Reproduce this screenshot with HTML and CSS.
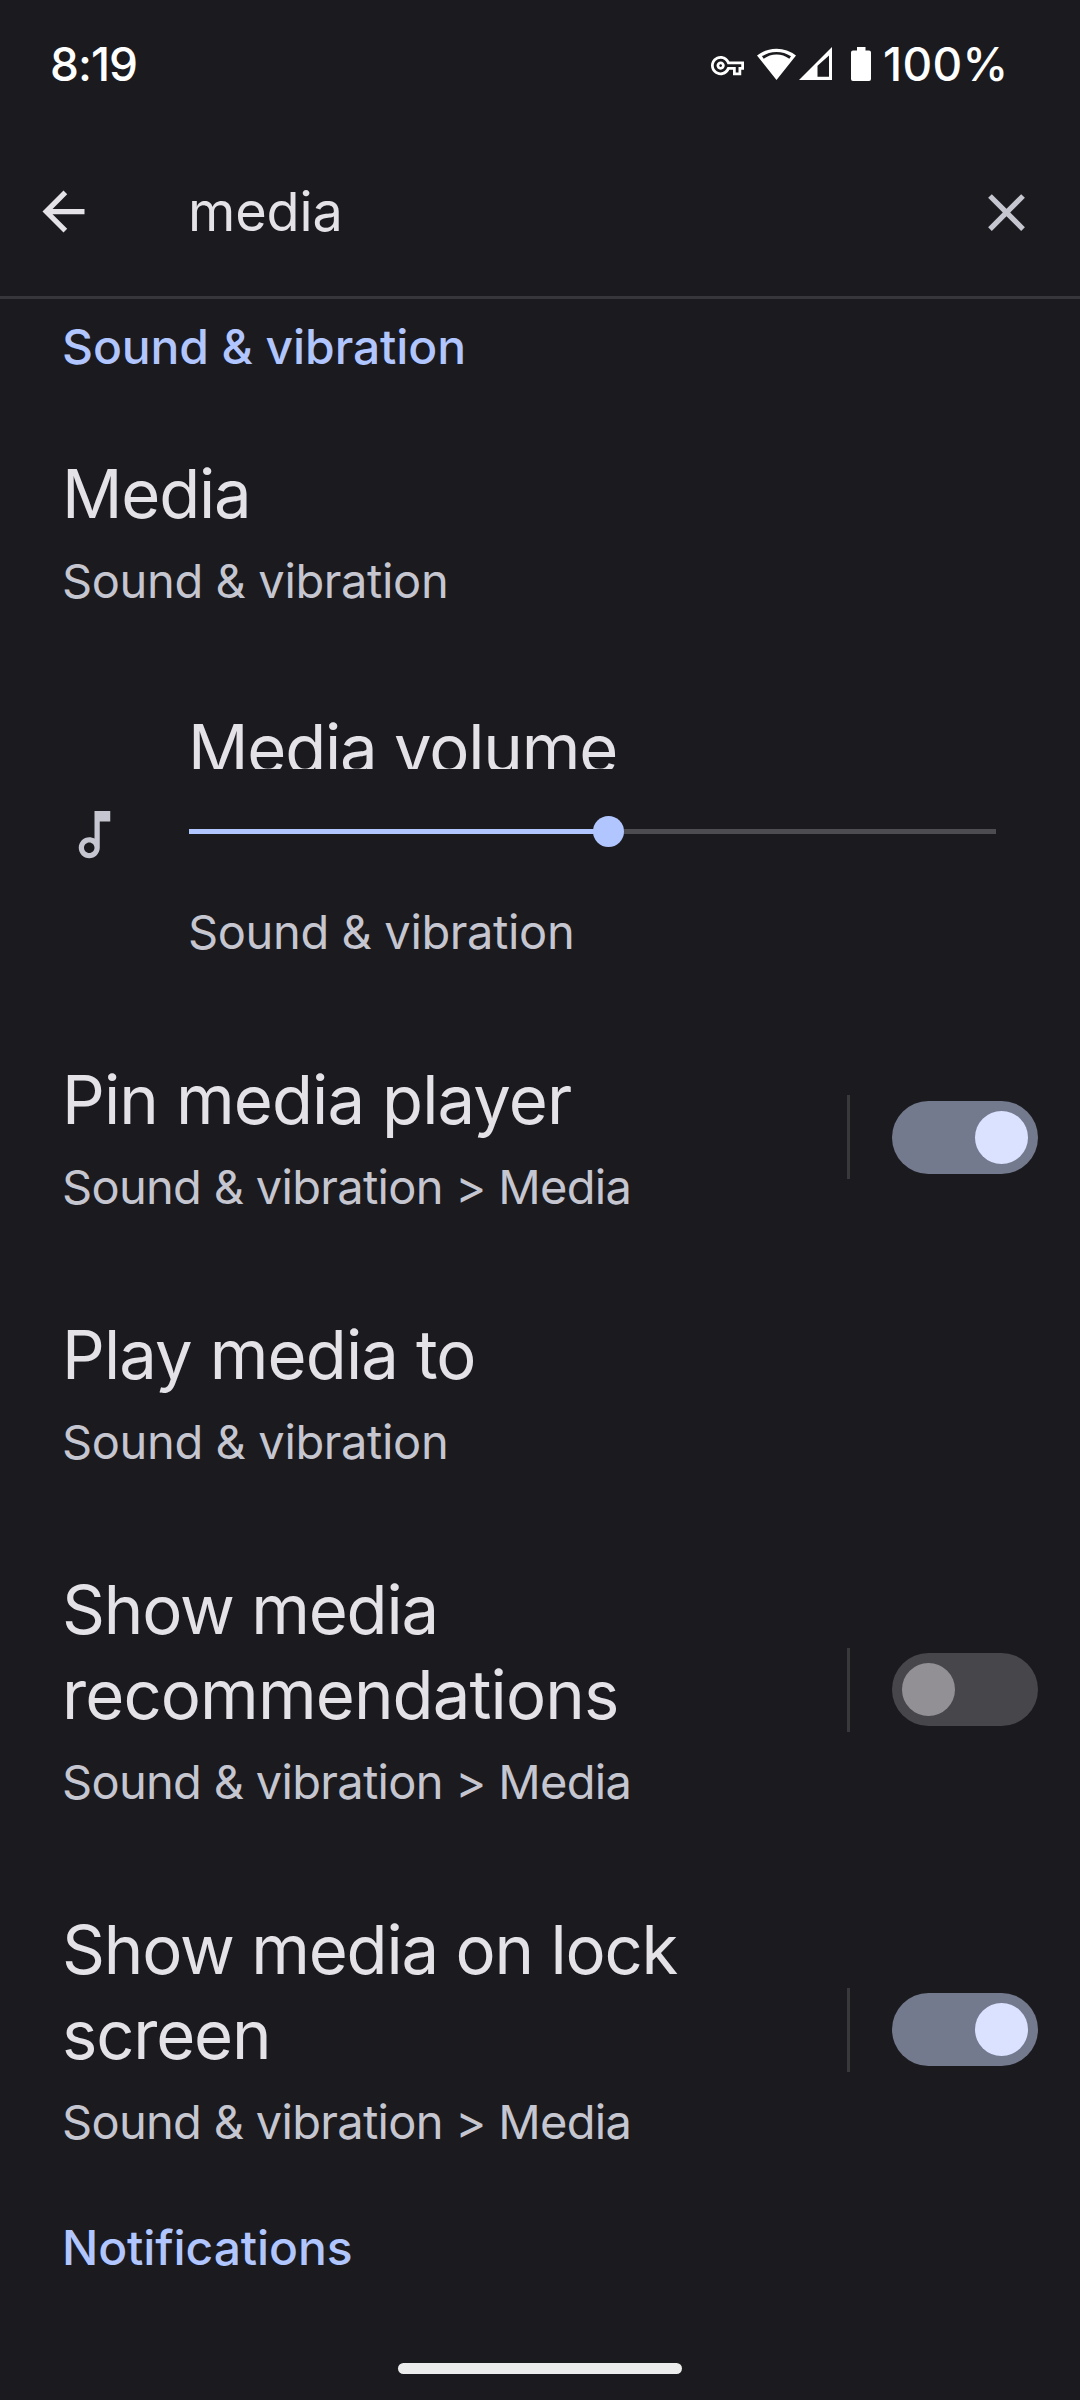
FILE: index.html
```
<!DOCTYPE html>
<html lang="en">
<head>
<meta charset="utf-8">
<title>Settings search</title>
<link rel="stylesheet" href="styles.css">
</head>
<body>
<div class="screen">
  <div class="status-bar">
    <span class="clock">8:19</span>
    <div class="status-icons">
      <svg class="icon-key" viewBox="0 0 24 24" width="33" height="33"><path d="M22 19h-6v-4h-2.68c-1.14 2.42-3.6 4-6.32 4-3.86 0-7-3.14-7-7s3.14-7 7-7c2.72 0 5.17 1.58 6.32 4H24v6h-2v4zm-4-2h2v-4h2v-2H11.94l-.23-.67C11.01 8.34 9.11 7 7 7c-2.76 0-5 2.24-5 5s2.24 5 5 5c2.11 0 4.01-1.34 4.71-3.33l.23-.67H18v4zM7 15c-1.65 0-3-1.35-3-3s1.35-3 3-3 3 1.35 3 3-1.35 3-3 3zm0-4c-.55 0-1 .45-1 1s.45 1 1 1 1-.45 1-1-.45-1-1-1z"/></svg>
      <svg class="icon-wifi" viewBox="0 0 39 33" width="39" height="33"><path fill-rule="evenodd" d="M0 8.6A31 31 0 0 1 39 8.6L19.5 33ZM5 9.300A26.500 26.500 0 0 1 34 9.300L32.300 11.800A21.500 21.500 0 0 0 6.700 11.800Z"/></svg>
      <svg class="icon-signal" viewBox="0 0 33 33" width="33" height="33"><path fill-rule="evenodd" d="M0 33H33V0ZM18.500 29.800V18.800L30 8.500V29.800Z"/></svg>
      <svg class="icon-battery" viewBox="0 0 20 34" width="20" height="34"><path d="M6 0H14.500V3.500H18Q20 3.500 20 5.500V32Q20 34 18 34H2Q0 34 0 32V5.500Q0 3.500 2 3.500H6Z"/></svg>
      <span class="battery-level">100%</span>
    </div>
  </div>

  <header class="search-bar">
    <svg class="icon-back" viewBox="0 0 24 24" width="63" height="63"><path d="M20 11H7.83l5.59-5.59L12 4l-8 8 8 8 1.41-1.41L7.83 13H20v-2z"/></svg>
    <span class="query">media</span>
    <svg class="icon-close" viewBox="0 0 24 24" width="63" height="63"><path d="M19 6.410L17.590 5 12 10.590 6.410 5 5 6.410 10.590 12 5 17.590 6.410 19 12 13.410 17.590 19 19 17.590 13.410 12z"/></svg>
  </header>

  <main class="results">
    <h2 class="group">Sound &amp; vibration</h2>

    <section class="item">
      <div class="item-text">
        <div class="title">Media</div>
        <div class="path">Sound &amp; vibration</div>
      </div>
    </section>

    <section class="item item-volume">
      <div class="item-icon">
        <svg viewBox="0 0 24 24" width="63" height="63"><path d="M12 3v10.550c-.59-.34-1.270-.55-2-.55-2.210 0-4 1.790-4 4s1.790 4 4 4 4-1.790 4-4V7h4V3h-6zm-2 16c-1.100 0-2-.9-2-2s.9-2 2-2 2 .9 2 2-.9 2-2 2z"/></svg>
      </div>
      <div class="item-text">
        <div class="title title-clipped">Media volume</div>
        <div class="slider"><div class="slider-track"><div class="slider-fill"><div class="slider-thumb"></div></div></div></div>
        <div class="path">Sound &amp; vibration</div>
      </div>
    </section>

    <section class="item">
      <div class="item-text">
        <div class="title title-wide">Pin media player</div>
        <div class="path path-nested">Sound &amp; vibration &gt; Media</div>
      </div>
      <div class="item-control"><div class="switch switch-on"><div class="switch-thumb"></div></div></div>
    </section>

    <section class="item">
      <div class="item-text">
        <div class="title title-wide">Play media to</div>
        <div class="path">Sound &amp; vibration</div>
      </div>
    </section>

    <section class="item">
      <div class="item-text">
        <div class="title">Show media <span class="title-wide">recommendations</span></div>
        <div class="path path-nested">Sound &amp; vibration &gt; Media</div>
      </div>
      <div class="item-control"><div class="switch"><div class="switch-thumb"></div></div></div>
    </section>

    <section class="item">
      <div class="item-text">
        <div class="title">Show media on lock screen</div>
        <div class="path path-nested">Sound &amp; vibration &gt; Media</div>
      </div>
      <div class="item-control"><div class="switch switch-on"><div class="switch-thumb"></div></div></div>
    </section>

    <h2 class="group group-last">Notifications</h2>
  </main>

  <div class="nav-bar"><div class="nav-handle"></div></div>
</div>
</body>
</html>
```
FILE: styles.css
```
* { box-sizing: border-box; }

body {
  margin: 0;
  background: #1b1b1f;
  color: #e4e2e6;
  font-family: Inter, Roboto, sans-serif;
}

svg { display: block; fill: currentColor; flex: none; }

.screen {
  display: flex;
  flex-direction: column;
  width: 1080px;
  height: 2400px;
  overflow: hidden;
}

/* Status bar */
.status-bar {
  display: flex;
  justify-content: space-between;
  align-items: center;
  height: 126px;
  padding: 0 73px 0 50px;
  color: #fff;
  font-size: 46px;
  font-weight: 550;
  line-height: 56px;
}
.clock { padding-top: 1px; letter-spacing: -1px; }
.status-icons { display: flex; align-items: center; }
.icon-key { margin: 4px 13px 0 0; }
.icon-wifi { margin-right: 3px; }
.icon-signal { margin-right: 19px; }
.icon-battery { margin: 1px 12px 0 0; }
.battery-level { width: 124px; padding-top: 1px; letter-spacing: 0.3px; white-space: nowrap; }

/* Search bar */
.search-bar {
  display: flex;
  align-items: center;
  height: 173px;
  padding: 1px 42px 0 32px;
  border-bottom: 3px solid #37363b;
}
.query {
  flex: 1;
  margin-left: 93px;
  font-size: 54px;
  line-height: 64px;
  letter-spacing: -0.1px;
}
.icon-close { margin-top: 1px; color: #c5c6d0; }

/* Results */
.group {
  height: 105px;
  margin: 0;
  padding: 19px 62px 0;
  color: #b1c5ff;
  font-size: 48px;
  font-weight: 500;
  line-height: 57px;
  letter-spacing: -0.1px;
}

.item {
  display: flex;
  align-items: stretch;
  padding: 47px 42px 50px 63px;
}
.item-text { flex: 1; min-width: 0; }
.title {
  margin-left: -1px;
  font-size: 67px;
  line-height: 85px;
  letter-spacing: -1.2px;
}
.title-wide { letter-spacing: -0.88px; }
.path {
  margin: 16px 0 0 -1px;
  color: #c5c6d0;
  font-size: 47px;
  line-height: 57px;
  letter-spacing: -0.38px;
}
.path-nested { letter-spacing: -0.7px; }

/* Volume row */
.item-volume { padding-right: 84px; }
.item-icon { width: 126px; padding-top: 97px; color: #c5c6d0; }
.title-clipped { height: 63px; overflow: hidden; }
.slider { display: flex; align-items: center; height: 125px; }
.slider-track { width: 807px; height: 5px; background: #4d4d51; }
.slider-fill {
  display: flex;
  justify-content: flex-end;
  align-items: center;
  width: 52%;
  height: 5px;
  background: #b1c5ff;
}
.slider-thumb {
  flex: none;
  width: 31px;
  height: 31px;
  margin-right: -15px;
  border-radius: 50%;
  background: #b1c5ff;
}
.item-volume .path { margin-top: 9px; }

/* Switches */
.item-control {
  display: flex;
  align-items: center;
  align-self: center;
  justify-content: flex-end;
  width: 191px;
  height: 84px;
  margin-top: 2px;
  border-left: 3px solid #39383b;
}
.switch {
  display: flex;
  align-items: center;
  width: 146px;
  height: 73px;
  padding: 0 10px;
  border-radius: 37px;
  background: #47464a;
}
.switch-thumb {
  width: 53px;
  height: 53px;
  border-radius: 50%;
  background: #929095;
}
.switch-on { justify-content: flex-end; background: #747a8d; }
.switch-on .switch-thumb { background: #dae2ff; }

/* Gesture bar */
.nav-bar {
  display: flex;
  flex: 1;
  justify-content: center;
  align-items: flex-end;
  padding-bottom: 26px;
}
.nav-handle {
  width: 284px;
  height: 11px;
  border-radius: 6px;
  background: #ececec;
}
```
